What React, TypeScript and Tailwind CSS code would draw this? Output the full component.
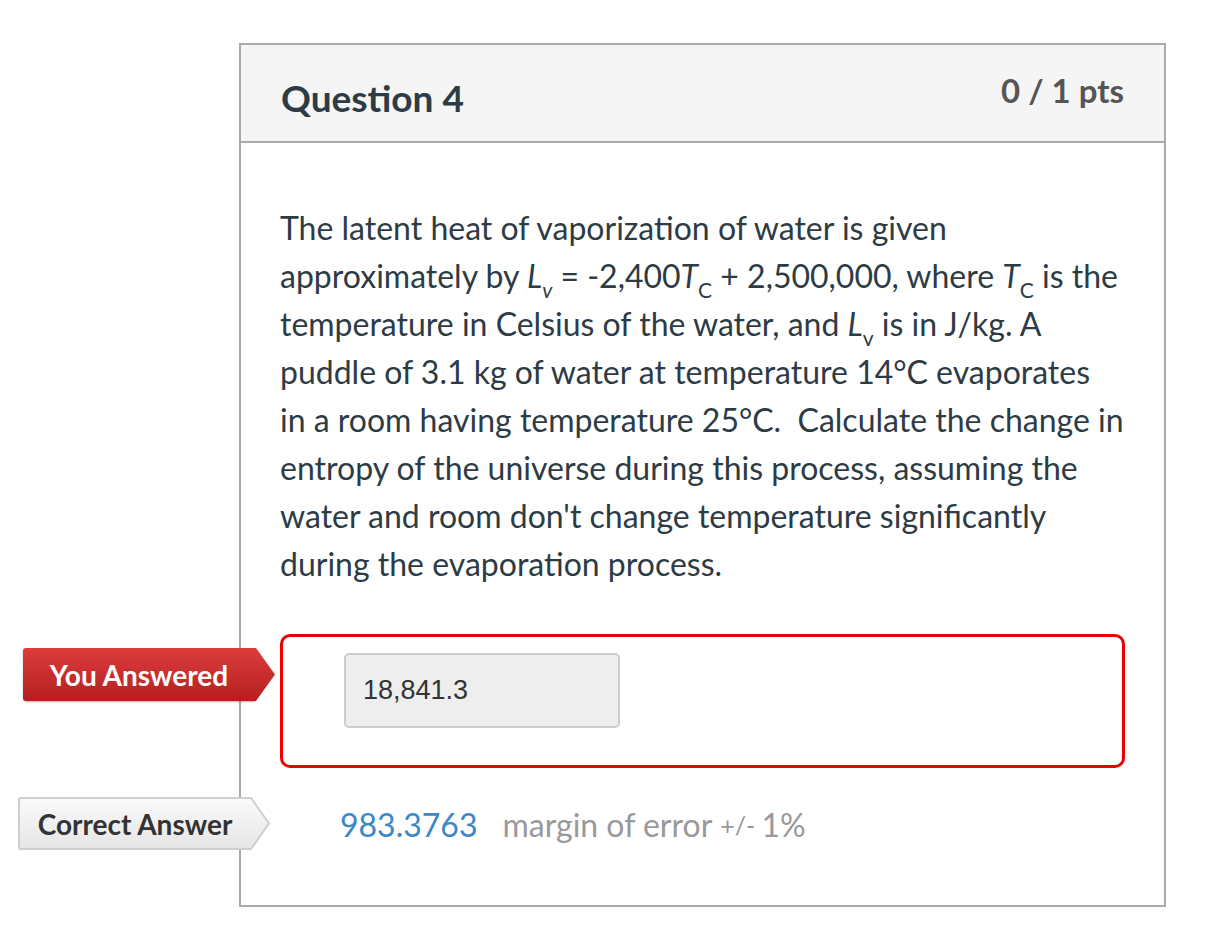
import React from "react";

export default function App() {
  return (
    <div className="min-h-[945px] w-[1228px] bg-white pt-[43px] pl-[239px]" style={{ fontFamily: "Lato, 'Noto Sans', sans-serif" }}>
      <div className="relative w-[927px] border-2 border-[#aaaaaa] bg-white">
        <div className="flex h-[98px] items-start justify-between border-b-2 border-[#aaaaaa] bg-[#f5f5f5] pl-[40px] pr-[40px]">
          <div className="mt-[31px] text-[37px] font-bold leading-[44px] text-[#2d3b45]">Question 4</div>
          <div className="mt-[25px] text-[33px] font-bold leading-[40px] text-[#555555]">0 / 1 pts</div>
        </div>
        <div className="px-[39px] pt-[61px] pb-[56px]">
          <div className="text-[32px] leading-[48px] text-[#2d3b45] whitespace-nowrap">
            <div>The latent heat of vaporization of water is given</div>
            <div>
              approximately by <i>L</i><sub className="text-[21px] align-[-5px]"><i>v</i></sub> = -2,400<i>T</i><sub className="text-[21px] align-[-5px]">C</sub> + 2,500,000, where <i>T</i><sub className="text-[21px] align-[-5px]">C</sub> is the
            </div>
            <div>
              temperature in Celsius of the water, and <i>L</i><sub className="text-[21px] align-[-5px]">v</sub> is in J/kg. A
            </div>
            <div>puddle of 3.1 kg of water at temperature 14°C evaporates</div>
            <div>in a room having temperature 25°C.&nbsp; Calculate the change in</div>
            <div>entropy of the universe during this process, assuming the</div>
            <div>water and room don't change temperature significantly</div>
            <div>during the evaporation process.</div>
          </div>

          <div className="relative mt-[46px] h-[134px] rounded-[10px] border-[3px] border-[#ee0000] pl-[61px] pt-[16px]">
            <div className="flex h-[75px] w-[276px] items-center rounded-[5px] border-2 border-[#cccccc] bg-[#eeeeee] pl-[17px] text-[27px] text-[#333333]" style={{ fontFamily: "'Liberation Sans', Arial, sans-serif" }}>
              18,841.3
            </div>
            <div className="absolute left-[-260px] top-[11px] flex h-[53px] items-center">
              <div className="flex h-[53px] w-[232px] items-center justify-center rounded-l-[3px] bg-gradient-to-b from-[#dc3c3c] to-[#b51f1f] text-[28px] font-bold text-white shadow-[0_1px_2px_rgba(0,0,0,0.3)]">
                You Answered
              </div>
              <svg width="22" height="53" viewBox="0 0 22 53" className="-ml-px">
                <defs>
                  <linearGradient id="rg" x1="0" y1="0" x2="0" y2="1">
                    <stop offset="0" stopColor="#dc3c3c" />
                    <stop offset="1" stopColor="#b51f1f" />
                  </linearGradient>
                </defs>
                <path d="M0 0 L2 0 L21 26.5 L2 53 L0 53 Z" fill="url(#rg)" />
              </svg>
            </div>
          </div>

          <div className="relative mt-[29px] flex h-[52px] items-center pl-[60px]">
            <div className="absolute left-[-262px] top-0 flex h-[53px] items-center">
              <div className="flex h-[53px] w-[232px] items-center justify-center rounded-l-[3px] border-y-2 border-l-2 border-[#cfcfcf] bg-gradient-to-b from-[#fafafa] to-[#e6e6e6] text-[28px] font-bold text-[#333333]">
                Correct Answer
              </div>
              <svg width="22" height="53" viewBox="0 0 22 53" className="-ml-px">
                <defs>
                  <linearGradient id="gg" x1="0" y1="0" x2="0" y2="1">
                    <stop offset="0" stopColor="#fafafa" />
                    <stop offset="1" stopColor="#e6e6e6" />
                  </linearGradient>
                </defs>
                <path d="M0 1 L2 1 L20 26.5 L2 52 L0 52 Z" fill="url(#gg)" stroke="#cfcfcf" strokeWidth="2" />
                <rect x="0" y="2" width="2" height="49" fill="url(#gg)" />
              </svg>
            </div>
            <span className="mt-[4px] text-[32px] text-[#3b87c8]">983.3763</span>
            <span className="mt-[4px] ml-[25px] text-[32px] text-[#999999]">margin of error</span>
            <span className="mt-[6px] ml-[8px] text-[25px] text-[#999999]">+/-</span>
            <span className="mt-[4px] ml-[6px] text-[32px] text-[#999999]">1%</span>
          </div>
        </div>
      </div>
    </div>
  );
}
